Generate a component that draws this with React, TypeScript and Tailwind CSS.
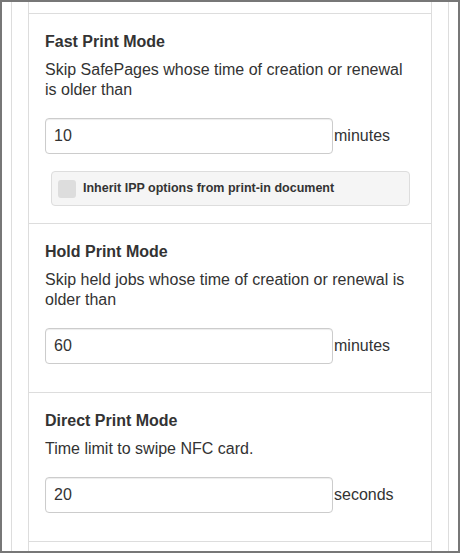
import React from 'react';

interface ModeSectionProps {
  title: string;
  description: React.ReactNode;
  value: string;
  unit: string;
  children?: React.ReactNode;
  bottomPad: string;
}

const ModeSection: React.FC<ModeSectionProps> = ({ title, description, value, unit, children, bottomPad }) => {
  return (
    <div className={`border-t border-[#ddd] pl-4 pr-4 pt-[18px] ${bottomPad}`}>
      <h3 className="text-[16px] leading-5 font-bold text-[#333]">{title}</h3>
      <p className="mt-2 text-[16px] leading-5 text-[#333]">{description}</p>
      <div className="mt-[18px] flex items-center">
        <input
          type="text"
          defaultValue={value}
          className="w-[288px] h-9 px-2 text-[16px] text-[#333] bg-white border border-[#ccc] rounded-[4px] shadow-[inset_0_1px_1px_rgba(0,0,0,0.075)] outline-none"
        />
        <span className="ml-px text-[16px] text-[#333]">{unit}</span>
      </div>
      {children}
    </div>
  );
};

export default function App() {
  return (
    <div className="w-[460px] h-[553px] overflow-hidden border-2 border-[#777] bg-white font-['Liberation_Sans',Arial,sans-serif]">
      <div className="ml-[9px] w-[438px] h-full border-l border-r border-[#ddd] px-4">
        <div className="h-full border-l border-r border-[#ddd] pt-[11px]">
          {/* Fast Print */}
          <ModeSection
            title="Fast Print Mode"
            description="Skip SafePages whose time of creation or renewal is older than"
            value="10"
            unit="minutes"
            bottomPad="pb-[17px]"
          >
            <label className="mt-[17px] ml-[6px] w-[359px] h-[35px] flex items-center gap-[7px] px-[6px] bg-[#f5f5f5] border border-[#ddd] rounded-[4px]">
              <span className="w-[18px] h-[18px] rounded-[3px] bg-[#ddd]" />
              <span className="text-[12.5px] font-bold text-[#333]">Inherit IPP options from print-in document</span>
            </label>
          </ModeSection>

          {/* Hold Print */}
          <ModeSection
            title="Hold Print Mode"
            description="Skip held jobs whose time of creation or renewal is older than"
            value="60"
            unit="minutes"
            bottomPad="pb-[28px]"
          />

          {/* Direct Print */}
          <ModeSection
            title="Direct Print Mode"
            description="Time limit to swipe NFC card."
            value="20"
            unit="seconds"
            bottomPad="pb-[28px]"
          />
          <div className="border-t border-[#ddd]" />
        </div>
      </div>
    </div>
  );
}
